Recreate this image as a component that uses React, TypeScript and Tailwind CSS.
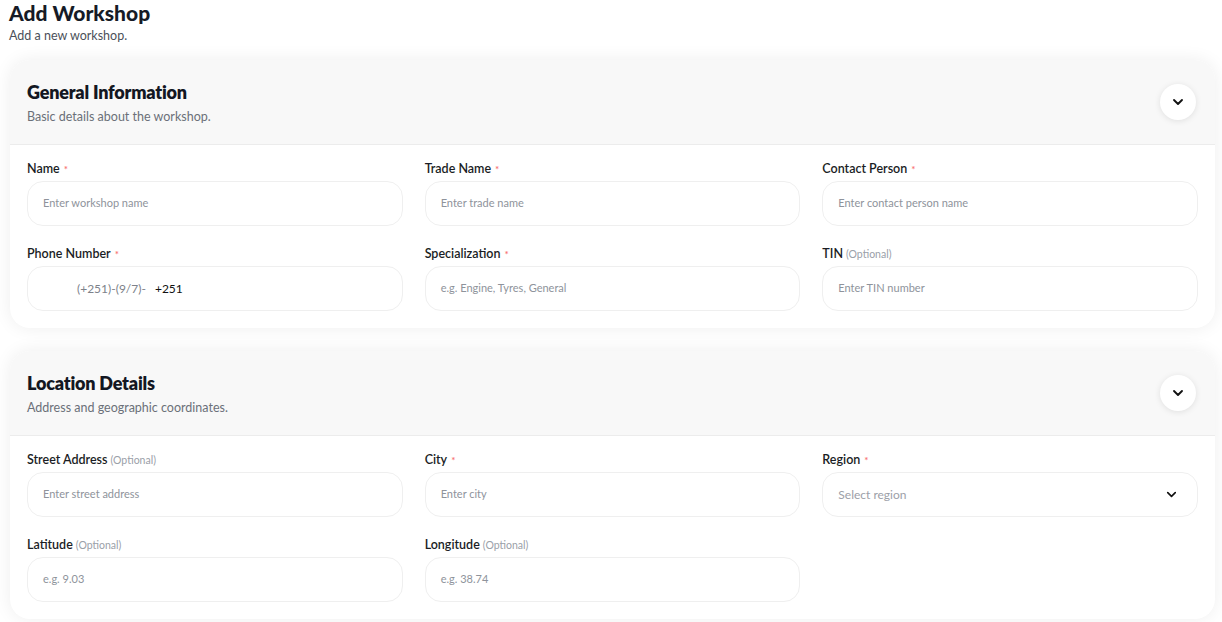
import { ChevronDown } from 'lucide-react';

const font = { fontFamily: 'Lato, "Noto Sans", sans-serif' };

interface FieldProps {
  label: string;
  required?: boolean;
  optional?: boolean;
  placeholder: string;
}

function Label({ label, required, optional }: Omit<FieldProps, 'placeholder'>) {
  return (
    <div className="flex items-center h-[16px] text-[12.5px] font-semibold text-[#1a1d24] leading-none">
      <span>{label}</span>
      {required && <span className="ml-[4px] text-[10px] text-[#f87171]">*</span>}
      {optional && <span className="ml-[3px] text-[10.5px] font-normal text-[#9aa0a8]">(Optional)</span>}
    </div>
  );
}

function Field({ label, required, optional, placeholder }: FieldProps) {
  return (
    <div className="flex flex-col gap-[4px]">
      <Label label={label} required={required} optional={optional} />
      <div className="h-[45px] rounded-[16px] border border-[#efefef] bg-white flex items-center px-[15px]">
        <span className="text-[11px] text-[#8e939b]">{placeholder}</span>
      </div>
    </div>
  );
}

function PhoneField() {
  return (
    <div className="flex flex-col gap-[4px]">
      <Label label="Phone Number" required />
      <div className="h-[45px] rounded-[16px] border border-[#efefef] bg-white flex items-center pl-[49px]">
        <span className="text-[12px] text-[#7d828a]">(+251)-(9/7)-</span>
        <span className="ml-[9px] text-[12px] text-[#111]">+251</span>
      </div>
    </div>
  );
}

function SelectField() {
  return (
    <div className="flex flex-col gap-[4px]">
      <Label label="Region" required />
      <div className="h-[45px] rounded-[16px] border border-[#efefef] bg-white flex items-center justify-between pl-[15px] pr-[18px]">
        <span className="text-[12px] text-[#9ca0a8]">Select region</span>
        <ChevronDown className="w-[15px] h-[15px] text-[#111]" strokeWidth={2.6} />
      </div>
    </div>
  );
}

function Section({ title, subtitle, children }: { title: string; subtitle: string; children: React.ReactNode }) {
  return (
    <div className="rounded-[20px] bg-white shadow-[0_0_18px_rgba(0,0,0,0.07)] overflow-hidden">
      <div className="h-[85px] bg-[#f8f8f8] border-b border-[#ececec] flex items-center justify-between pl-[17px] pr-[19px]">
        <div className="flex flex-col">
          <h2 className="text-[18px] font-extrabold text-[#131722] tracking-[-0.2px] leading-[22px]">{title}</h2>
          <p className="mt-[7px] text-[12.5px] text-[#6b7079] leading-[14px]">{subtitle}</p>
        </div>
        <button className="w-[36px] h-[36px] rounded-full bg-white shadow-[0_1px_6px_rgba(0,0,0,0.1)] flex items-center justify-center">
          <ChevronDown className="w-[16px] h-[16px] text-[#111]" strokeWidth={2.8} />
        </button>
      </div>
      <div className="px-[17px] pt-[16px] pb-[17px] grid grid-cols-3 gap-x-[22px] gap-y-[20px]">{children}</div>
    </div>
  );
}

export default function App() {
  return (
    <div className="min-h-screen bg-white pl-[10px] pr-[7px]" style={font}>
      <div className="pt-[1px]">
        <h1 className="text-[21px] font-black text-[#161b26] leading-[24px] -ml-[1px]">Add Workshop</h1>
        <p className="mt-[4px] text-[12.5px] text-[#4b5059] leading-[13px] -ml-[1px]">Add a new workshop.</p>
      </div>
      <div className="mt-[18px] flex flex-col gap-[23px]">
        <Section title="General Information" subtitle="Basic details about the workshop.">
          <Field label="Name" required placeholder="Enter workshop name" />
          <Field label="Trade Name" required placeholder="Enter trade name" />
          <Field label="Contact Person" required placeholder="Enter contact person name" />
          <PhoneField />
          <Field label="Specialization" required placeholder="e.g. Engine, Tyres, General" />
          <Field label="TIN" optional placeholder="Enter TIN number" />
        </Section>
        <Section title="Location Details" subtitle="Address and geographic coordinates.">
          <Field label="Street Address" optional placeholder="Enter street address" />
          <Field label="City" required placeholder="Enter city" />
          <SelectField />
          <Field label="Latitude" optional placeholder="e.g. 9.03" />
          <Field label="Longitude" optional placeholder="e.g. 38.74" />
        </Section>
      </div>
    </div>
  );
}
